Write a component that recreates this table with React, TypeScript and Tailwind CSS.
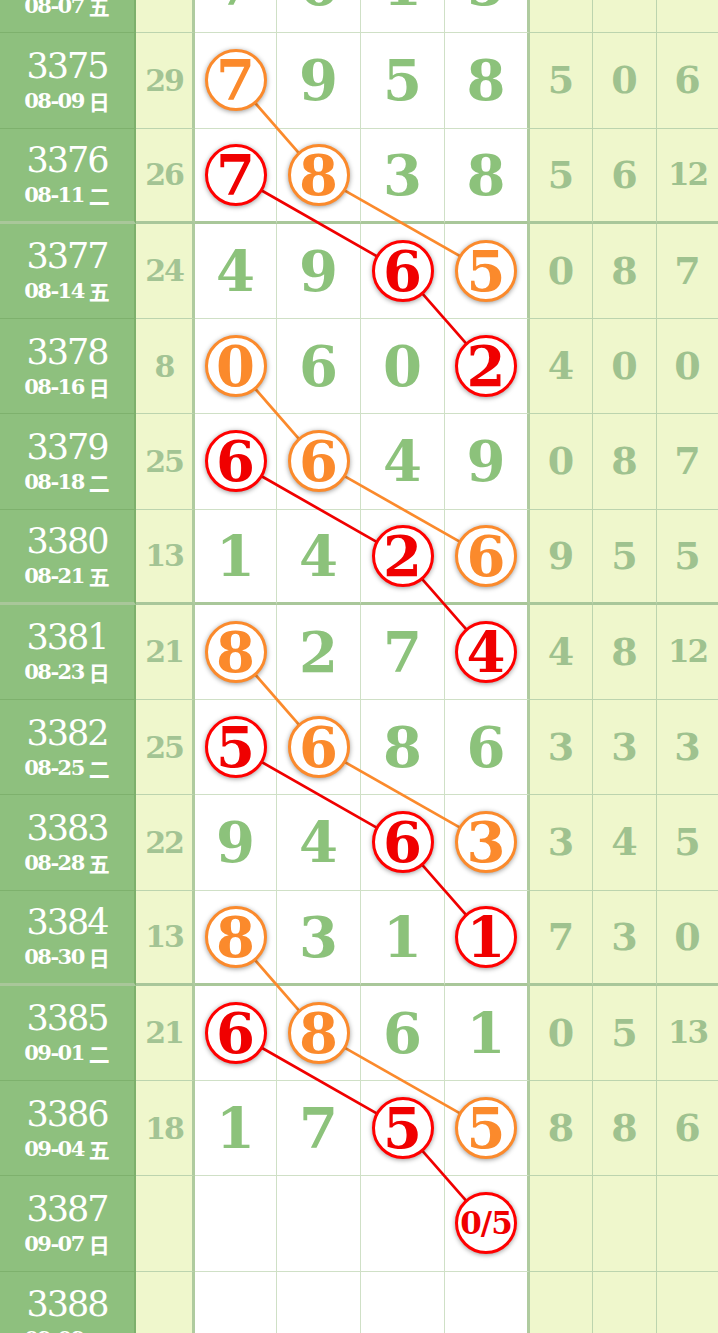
import React from "react";

type Cell = { v: string; c?: "o" | "r" };
type Row = { no: string; date: string; wd: string; nums: Cell[]; tail: string[]; thick?: boolean };

const ROW_H = 95.25;

// "7o" = orange circle, "2r" = red circle, "-" = empty
const raw: [string, string, string, string, string, boolean?][] = [
  ["3374", "08-07", "五", "7 6 1 5", "", false],
  ["3375", "08-09", "日", "7o 9 5 8", "5 0 6"],
  ["3376", "08-11", "二", "7r 8o 3 8", "5 6 12", true],
  ["3377", "08-14", "五", "4 9 6r 5o", "0 8 7"],
  ["3378", "08-16", "日", "0o 6 0 2r", "4 0 0"],
  ["3379", "08-18", "二", "6r 6o 4 9", "0 8 7"],
  ["3380", "08-21", "五", "1 4 2r 6o", "9 5 5", true],
  ["3381", "08-23", "日", "8o 2 7 4r", "4 8 12"],
  ["3382", "08-25", "二", "5r 6o 8 6", "3 3 3"],
  ["3383", "08-28", "五", "9 4 6r 3o", "3 4 5"],
  ["3384", "08-30", "日", "8o 3 1 1r", "7 3 0", true],
  ["3385", "09-01", "二", "6r 8o 6 1", "0 5 13"],
  ["3386", "09-04", "五", "1 7 5r 5o", "8 8 6"],
  ["3387", "09-07", "日", "- - - 0/5r", ""],
  ["3388", "09-09", "二", "- - - -", ""],
];

const rows: Row[] = raw.map(([no, date, wd, nums, tail, thick]) => ({
  no,
  date,
  wd,
  nums: nums.split(" ").map((s) => {
    if (s === "-") return { v: "" };
    const last = s[s.length - 1];
    if (last === "o" || last === "r") return { v: s.slice(0, -1), c: last };
    return { v: s };
  }),
  tail: tail ? tail.split(" ") : ["", "", ""],
  thick: !!thick,
}));

const centersX = [235.5, 318.5, 402.5, 486];

// lines between circled numbers, [rowIndex, col] pairs
const orangeLines: [number, number, number, number][] = [];
const redLines: [number, number, number, number][] = [];
rows.forEach((r, i) => {
  if (i === rows.length - 1) return;
  const next = rows[i + 1];
  r.nums.forEach((c, j) => {
    if (!c.c) return;
    const k = next.nums.findIndex((n) => n.c === c.c);
    if (k < 0 || k <= j) return;
    (c.c === "o" ? orangeLines : redLines).push([i, j, i + 1, k]);
  });
});

const serif = "font-['DejaVu_Serif','Liberation_Serif',serif]";

function Circle({ cell }: { cell: Cell }) {
  const color = cell.c === "o" ? "border-[#fb8a2c] text-[#fb8a2c]" : "border-[#ff0000] text-[#f00000]";
  const small = cell.v.length > 1;
  return (
    <div
      className={`relative z-10 flex h-[62px] w-[62px] items-center justify-center rounded-full border-[3px] bg-white shadow-[0_1px_5px_rgba(0,0,0,0.4)] ${color}`}
    >
      <span
        className={`${serif} font-bold leading-none ${small ? "text-[31px] tracking-[-1px]" : "text-[56px]"}`}
      >
        {cell.v}
      </span>
    </div>
  );
}

export default function App() {
  const totalH = rows.length * ROW_H;
  const lineY = (i: number) => i * ROW_H + ROW_H / 2 - 0.5;

  return (
    <div className="w-[718px] h-[1333px] overflow-hidden bg-white">
      <div className="relative -mt-[62px]" style={{ height: totalH }}>
        <svg
          className="absolute left-0 top-0 z-0 pointer-events-none"
          width={718}
          height={totalH}
          viewBox={`0 0 718 ${totalH}`}
        >
          {orangeLines.map(([a, j, b, k], n) => (
            <line
              key={"o" + n}
              x1={centersX[j]}
              y1={lineY(a)}
              x2={centersX[k]}
              y2={lineY(b)}
              stroke="#fb8a2c"
              strokeWidth={2.7}
            />
          ))}
          {redLines.map(([a, j, b, k], n) => (
            <line
              key={"r" + n}
              x1={centersX[j]}
              y1={lineY(a)}
              x2={centersX[k]}
              y2={lineY(b)}
              stroke="#f00000"
              strokeWidth={2.7}
            />
          ))}
        </svg>

        {rows.map((r) => {
          const bb = r.thick ? "border-b-[3px] border-b-[#a9c79a]" : "border-b";
          return (
            <div
              key={r.no}
              className="grid h-[95.25px] grid-cols-[136px_59px_82px_84px_84px_85px_63px_64px_61px]"
            >
              {/* 期号 */}
              <div
                className={`flex flex-col items-center justify-center bg-[#8ec07e] border-r-2 border-r-[#7db06c] text-white ${bb} ${
                  r.thick ? "" : "border-b-[#7eb16d]"
                }`}
              >
                <span className={`${serif} text-[35px] leading-[38px] tracking-[-2px]`}>{r.no}</span>
                <span className="mt-[3px] flex items-center gap-[5px] text-[21px] leading-[26px] font-bold">
                  <span className={`${serif} tracking-[-1.5px]`}>{r.date}</span>
                  <span className="font-['Noto_Sans_CJK_SC',sans-serif] text-[21px] font-bold">{r.wd}</span>
                </span>
              </div>

              {/* 和值 */}
              <div
                className={`flex items-center justify-center bg-[#eff7cc] border-r-[3px] border-r-[#afcb9f] ${bb} ${
                  r.thick ? "" : "border-b-[#bcd4ae]"
                }`}
              >
                <span className={`${serif} font-bold text-[30px] tracking-[-2px] text-[#a3c494]`}>
                  {r.nums.every((n) => n.v) && r.tail[0] ? r.nums.reduce((s, n) => s + Number(n.v), 0) : ""}
                </span>
              </div>

              {/* 开奖号码 */}
              {r.nums.map((c, j) => (
                <div
                  key={j}
                  className={`flex items-center justify-center bg-white ${
                    j === 3 ? "border-r-[3px] border-r-[#afcb9f]" : "border-r border-r-[#cfe0c6]"
                  } ${bb} ${r.thick ? "" : "border-b-[#cfe0c6]"}`}
                >
                  {c.c ? (
                    <Circle cell={c} />
                  ) : (
                    <span className={`${serif} font-bold text-[56px] leading-none text-[#8cc27b]`}>{c.v}</span>
                  )}
                </div>
              ))}

              {/* 跨度等 */}
              {r.tail.map((t, j) => (
                <div
                  key={"t" + j}
                  className={`flex items-center justify-center bg-[#eff7cc] ${
                    j < 2 ? "border-r border-r-[#bcd4ae]" : ""
                  } ${bb} ${r.thick ? "" : "border-b-[#bcd4ae]"}`}
                >
                  <span
                    className={`${serif} font-bold leading-none text-[#9fc28f] ${
                      t.length > 1 ? "text-[31px] tracking-[-2px]" : "text-[38px]"
                    }`}
                  >
                    {t}
                  </span>
                </div>
              ))}
            </div>
          );
        })}
      </div>
    </div>
  );
}
